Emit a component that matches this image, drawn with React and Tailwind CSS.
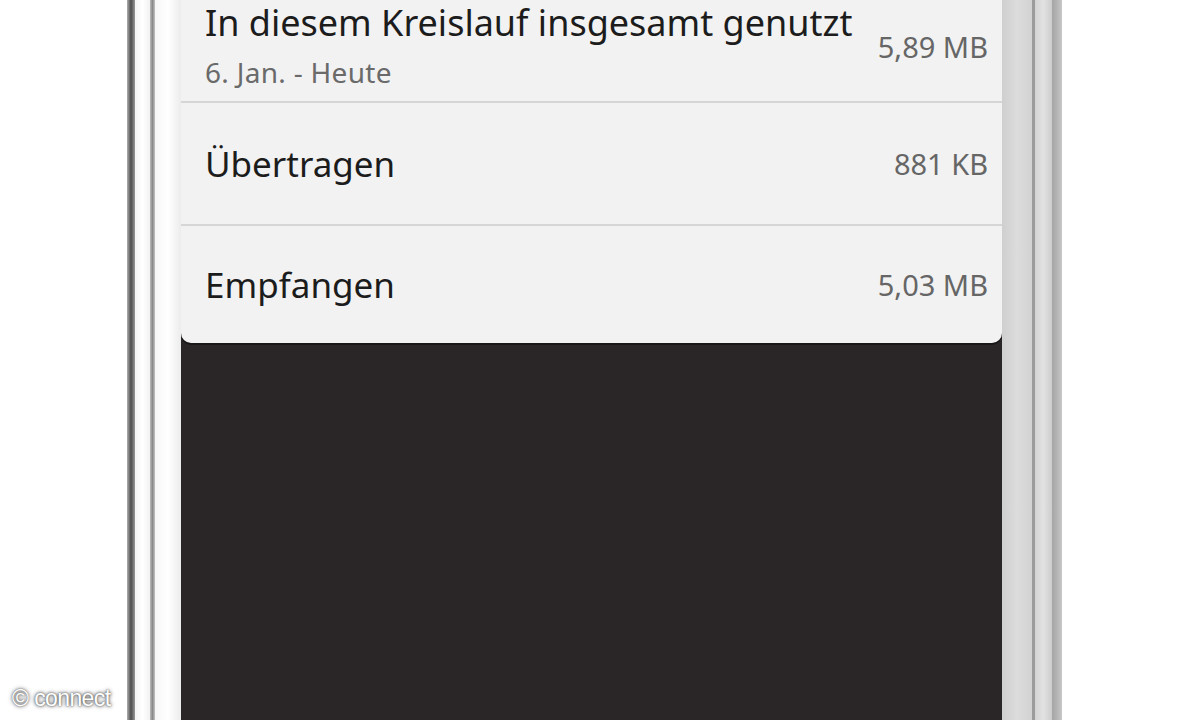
import React from 'react';

const rows = [
    { label: 'Übertragen', value: '881 KB' },
    { label: 'Empfangen', value: '5,03 MB' }
];

const App = () => {
    return (
        <div
            className="flex h-[720px] w-[1200px] overflow-hidden bg-white"
            style={{ fontFamily: '"Noto Sans", "Open Sans", sans-serif' }}
        >
            {/* left side of the phone */}
            <div className="flex w-[127px] flex-col justify-end pb-[10px] pl-[12px]">
                <span
                    className="text-[23px] leading-none tracking-[-0.6px] text-white"
                    style={{ fontFamily: '"Liberation Sans", sans-serif', textShadow: '0 0 4px #444, 0 0 2px #555' }}
                >
                    © connect
                </span>
            </div>
            <div className="w-[8px] bg-gradient-to-r from-[#b0b0b0] via-[#4d4d4d] to-[#9a9a9a]" />
            <div className="w-[15px] bg-gradient-to-r from-[#f4f4f4] via-white to-[#f2f2f2]" />
            <div className="w-[5px] bg-gradient-to-r from-[#bdbdbd] via-[#8a8a8a] to-[#c4c4c4]" />
            <div className="w-[26px] bg-gradient-to-r from-[#f7f7f7] via-white to-[#ececec]" />

            {/* screen */}
            <div className="flex w-[821px] flex-col bg-[#2a2627]">
                <div className="overflow-hidden rounded-b-[10px] bg-[#f2f2f2] shadow-[0_2px_0_#1a1718]">
                    <div className="flex h-[103px] items-start justify-between border-b-2 border-[#d6d6d6] pl-[24px] pr-[14px]">
                        <div className="flex flex-col">
                            <span className="text-[36px] leading-[46px] text-[#1c1c1c]">In diesem Kreislauf insgesamt genutzt</span>
                            <span className="mt-[12px] text-[28px] leading-[28px] tracking-[0.3px] text-[#6a6a6a]">6. Jan. - Heute</span>
                        </div>
                        <span className="mt-[32px] text-[29px] leading-[29px] text-[#666]">5,89 MB</span>
                    </div>
                    {rows.map((row, i) => (
                        <div
                            key={row.label}
                            className={
                                i === 0
                                    ? 'flex h-[123px] items-center justify-between border-b-2 border-[#d6d6d6] pl-[24px] pr-[14px]'
                                    : 'flex h-[117px] items-center justify-between pl-[24px] pr-[14px]'
                            }
                        >
                            <span className="text-[35px] leading-none text-[#1c1c1c]">{row.label}</span>
                            <span className="text-[29px] leading-none text-[#666]">{row.value}</span>
                        </div>
                    ))}
                </div>
            </div>

            {/* right side of the phone */}
            <div className="w-[30px] bg-gradient-to-r from-[#cfcfcf] via-[#dcdcdc] to-[#d2d2d2]" />
            <div className="w-[3px] bg-[#9c9c9c]" />
            <div className="w-[17px] bg-gradient-to-r from-[#d4d4d4] via-[#e2e2e2] to-[#cdcdcd]" />
            <div className="w-[10px] bg-gradient-to-r from-[#a6a6a6] via-[#b4b4b4] to-[#c8c8c8]" />
            <div className="flex-1 bg-white" />
        </div>
    );
};

export default App;
